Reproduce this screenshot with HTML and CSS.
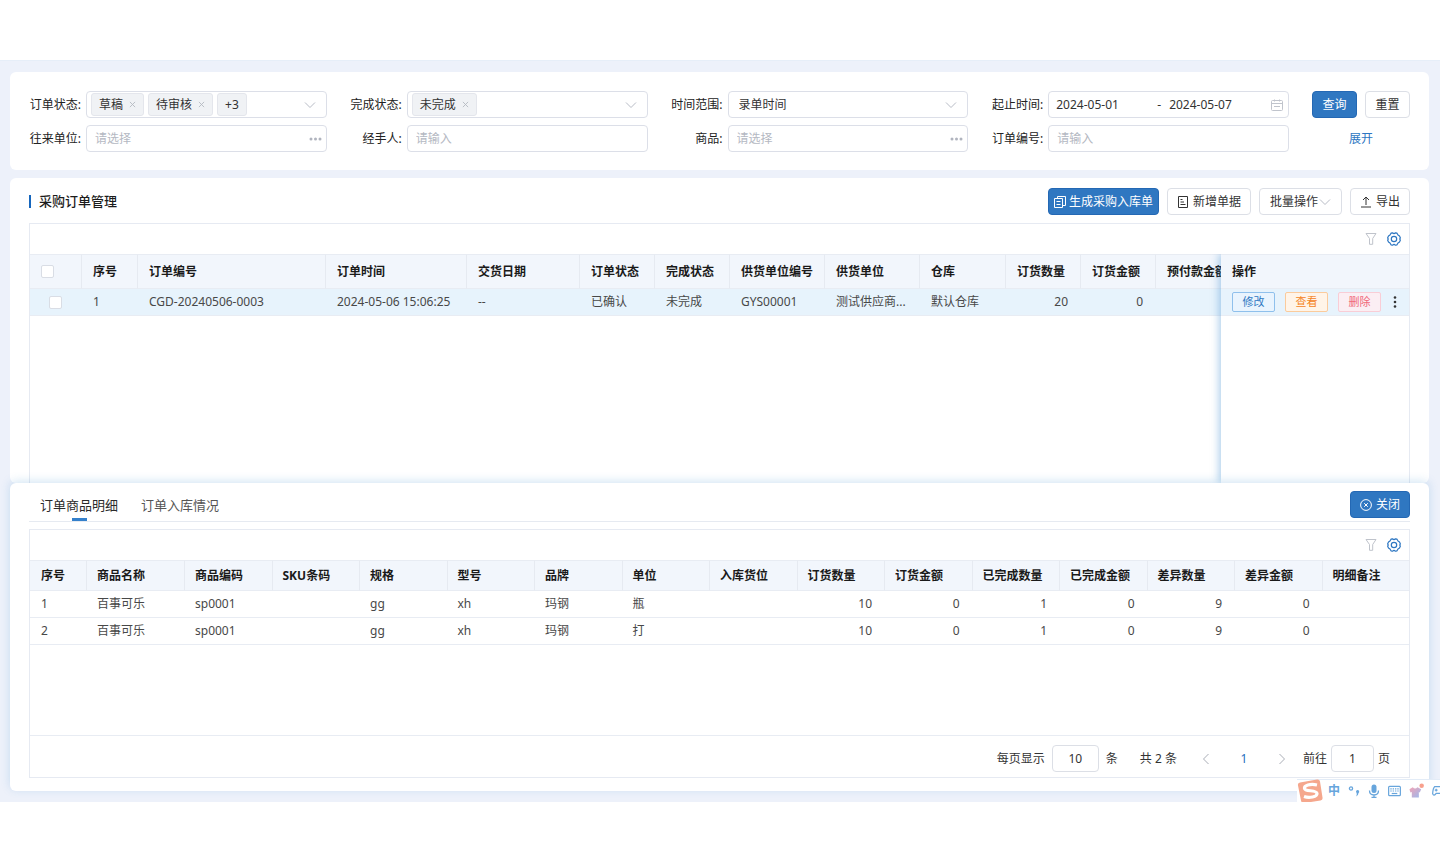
FILE: index.html
```html
<!DOCTYPE html>
<html lang="zh-CN">
<head>
<meta charset="utf-8">
<title>采购订单管理</title>
<link rel="stylesheet" href="styles.css">
</head>
<body>
<svg class="defs" aria-hidden="true">
  <symbol id="chevron" viewBox="0 0 12 12"><path d="M1 3.5 6 8.5 11 3.5"/></symbol>
  <symbol id="close" viewBox="0 0 8 8"><path d="M1 1 7 7M7 1 1 7"/></symbol>
  <symbol id="filter" viewBox="0 0 12 14"><path d="M1 1.5H11L7.7 6.5V12.3H4.5V6.5Z"/></symbol>
  <symbol id="gear" viewBox="0 0 14 14"><path d="M4 1.200 5.600.8 7 1.700 8.400.8 10 1.200 11 3 12.500 4 13.400 5.900 12.700 7 13.400 8.100 12.500 10 11 11 10 12.800 8.400 13.200 7 12.300 5.600 13.200 4 12.800 3 11 1.500 10 .6 8.100 1.300 7 .6 5.900 1.500 4 3 3Z" stroke-linejoin="round" stroke-width="1.200"/><circle cx="7" cy="7" r="2.700" stroke-width="1.200"/></symbol>
</svg>
<main class="stage">
  <form class="card filters">
    <div class="field">
      <span class="label" id="l-status">订单状态:</span>
      <div class="box tags" role="group" aria-labelledby="l-status">
        <span class="tag">草稿<button type="button" class="tag-x" aria-label="移除草稿"><svg><use href="#close"/></svg></button></span>
        <span class="tag">待审核<button type="button" class="tag-x" aria-label="移除待审核"><svg><use href="#close"/></svg></button></span>
        <span class="tag">+3</span>
        <svg class="suffix chevron"><use href="#chevron"/></svg>
      </div>
    </div>
    <div class="field">
      <span class="label" id="l-done">完成状态:</span>
      <div class="box tags" role="group" aria-labelledby="l-done">
        <span class="tag">未完成<button type="button" class="tag-x" aria-label="移除未完成"><svg><use href="#close"/></svg></button></span>
        <svg class="suffix chevron"><use href="#chevron"/></svg>
      </div>
    </div>
    <div class="field">
      <label class="label" for="range">时间范围:</label>
      <div class="box">
        <select id="range"><option>录单时间</option></select>
        <svg class="suffix chevron"><use href="#chevron"/></svg>
      </div>
    </div>
    <div class="field">
      <label class="label" for="from">起止时间:</label>
      <div class="box dates">
        <input id="from" type="text" value="2024-05-01">
        <span>-</span>
        <input type="text" value="2024-05-07" aria-label="结束时间">
        <svg class="suffix calendar" viewBox="0 0 12 12"><rect x=".5" y="1.500" width="11" height="10" rx="1"/><path d="M.5 4.500H11.500M3.500.5V2.500M8.500.5V2.500M3 7.500H9" /></svg>
      </div>
    </div>
    <div class="form-actions">
      <button type="submit" class="btn primary">查询</button>
      <button type="reset" class="btn">重置</button>
    </div>
    <div class="field">
      <label class="label" for="partner">往来单位:</label>
      <div class="box"><input id="partner" type="text" placeholder="请选择"><svg class="suffix dots" viewBox="0 0 12 4"><circle cx="1.500" cy="2" r="1.500"/><circle cx="6" cy="2" r="1.500"/><circle cx="10.500" cy="2" r="1.500"/></svg></div>
    </div>
    <div class="field">
      <label class="label" for="handler">经手人:</label>
      <div class="box"><input id="handler" type="text" placeholder="请输入"></div>
    </div>
    <div class="field">
      <label class="label" for="goods">商品:</label>
      <div class="box"><input id="goods" type="text" placeholder="请选择"><svg class="suffix dots" viewBox="0 0 12 4"><circle cx="1.500" cy="2" r="1.500"/><circle cx="6" cy="2" r="1.500"/><circle cx="10.500" cy="2" r="1.500"/></svg></div>
    </div>
    <div class="field">
      <label class="label" for="orderno">订单编号:</label>
      <div class="box"><input id="orderno" type="text" placeholder="请输入"></div>
    </div>
    <a class="expand" href="#more">展开</a>
  </form>

  <section class="card list">
    <header class="bar">
      <h1>采购订单管理</h1>
      <div class="bar-actions">
        <button class="btn primary wide"><svg class="icon" viewBox="0 0 12 12"><path d="M3.500.5H11.500V9.500H9M3.500.5V2.500M.5 2.500H8.500V11.500H.5ZM2.500 5.500H6.500M2.500 8.500H6.500"/></svg>生成采购入库单</button>
        <button class="btn wide"><svg class="icon" viewBox="0 0 12 12"><path d="M1.500.5H10.500V11.500H1.500ZM3.500 3.500H5.500M3.500 6H7M3.500 8.500H8.500"/></svg>新增单据</button>
        <button class="btn wide drop">批量操作<svg class="chevron"><use href="#chevron"/></svg></button>
        <button class="btn wide"><svg class="icon" viewBox="0 0 12 12"><path d="M6 9V1M3 4 6 1 9 4M1 11H11"/></svg>导出</button>
      </div>
    </header>
    <div class="grid-box">
      <div class="tools">
        <button class="tool" aria-label="筛选"><svg class="filter-icon"><use href="#filter"/></svg></button>
        <button class="tool" aria-label="列设置"><svg class="gear-icon"><use href="#gear"/></svg></button>
      </div>
      <div class="split">
        <div class="scroll">
          <table class="orders">
            <colgroup><col class="w-check"><col class="w-index"><col class="w-no"><col class="w-time"><col class="w-date"><col class="w-num"><col class="w-num"><col class="w-code"><col class="w-code"><col class="w-store"><col class="w-num"><col class="w-num"><col class="w-store"></colgroup>
            <thead><tr><th><input type="checkbox" aria-label="全选"></th><th>序号</th><th>订单编号</th><th>订单时间</th><th>交货日期</th><th>订单状态</th><th>完成状态</th><th>供货单位编号</th><th>供货单位</th><th>仓库</th><th>订货数量</th><th>订货金额</th><th>预付款金额</th></tr></thead>
            <tbody><tr><td class="pick"><input type="checkbox" aria-label="选择第1行"></td><td>1</td><td>CGD-20240506-0003</td><td>2024-05-06 15:06:25</td><td>--</td><td>已确认</td><td>未完成</td><td>GYS00001</td><td>测试供应商...</td><td>默认仓库</td><td class="num">20</td><td class="num">0</td><td></td></tr></tbody>
          </table>
        </div>
        <div class="pinned">
          <table class="orders">
            <thead><tr><th>操作</th></tr></thead>
            <tbody><tr><td><div class="ops"><button class="op edit">修改</button><button class="op view">查看</button><button class="op del">删除</button><button class="more" aria-label="更多"><svg viewBox="0 0 4 12"><circle cx="2" cy="1.500" r="1.300"/><circle cx="2" cy="6" r="1.300"/><circle cx="2" cy="10.500" r="1.300"/></svg></button></div></td></tr></tbody>
          </table>
        </div>
      </div>
    </div>
  </section>

  <section class="card detail">
    <header class="tabs">
      <button class="tab active">订单商品明细</button>
      <button class="tab">订单入库情况</button>
      <button class="btn primary wide shut"><svg class="icon" viewBox="0 0 12 12"><circle cx="6" cy="6" r="5.400"/><path d="M4.200 4.200 7.800 7.800M7.800 4.200 4.200 7.800"/></svg>关闭</button>
    </header>
    <div class="grid-box">
      <div class="tools">
        <button class="tool" aria-label="筛选"><svg class="filter-icon"><use href="#filter"/></svg></button>
        <button class="tool" aria-label="列设置"><svg class="gear-icon"><use href="#gear"/></svg></button>
      </div>
      <div class="lines-area">
        <table class="lines">
          <colgroup><col class="w-index"><col class="w-name"><col span="14"></colgroup>
          <thead><tr><th>序号</th><th>商品名称</th><th>商品编码</th><th>SKU条码</th><th>规格</th><th>型号</th><th>品牌</th><th>单位</th><th>入库货位</th><th>订货数量</th><th>订货金额</th><th>已完成数量</th><th>已完成金额</th><th>差异数量</th><th>差异金额</th><th>明细备注</th></tr></thead>
          <tbody>
            <tr><td>1</td><td>百事可乐</td><td>sp0001</td><td></td><td>gg</td><td>xh</td><td>玛钢</td><td>瓶</td><td></td><td class="num">10</td><td class="num">0</td><td class="num">1</td><td class="num">0</td><td class="num">9</td><td class="num">0</td><td></td></tr>
            <tr><td>2</td><td>百事可乐</td><td>sp0001</td><td></td><td>gg</td><td>xh</td><td>玛钢</td><td>打</td><td></td><td class="num">10</td><td class="num">0</td><td class="num">1</td><td class="num">0</td><td class="num">9</td><td class="num">0</td><td></td></tr>
          </tbody>
        </table>
      </div>
      <footer class="pager">
        <label for="size">每页显示</label><input id="size" class="size" type="text" value="10"><span>条</span>
        <span class="total">共 2 条</span>
        <button class="step prev" aria-label="上一页"><svg><use href="#chevron"/></svg></button>
        <button class="page">1</button>
        <button class="step next" aria-label="下一页"><svg><use href="#chevron"/></svg></button>
        <label for="goto">前往</label><input id="goto" class="goto" type="text" value="1"><span>页</span>
      </footer>
    </div>
  </section>

  <aside class="ime" aria-label="输入法">
    <svg class="ime-logo" viewBox="0 0 26 24"><path d="M3 3.500 20 .5Q22.500 0 23 2.500L25.500 18.500Q26 21 23.500 21.500L7.500 24Q4.500 24.500 4 21.500L1 6.500Q.5 4 3 3.500Z" fill="#f5a78d"/><path class="ime-curve" d="M20 6C13 4.500 7 6.500 7.500 9.500 8 13 19.500 10.500 20 14.500 20.300 18 12 19.300 7 17.500"/></svg>
    <span class="ime-mode">中</span>
    <svg class="ime-punct" viewBox="0 0 12 12"><circle class="ime-line" cx="3" cy="3.500" r="1.600"/><path d="M8 6.500a1.600 1.600 0 1 1 2.500 1.500Q10.500 10.500 8 11.500 9 10 8.700 8.600Z" fill="#67a5dc"/></svg>
    <svg class="ime-mic" viewBox="0 0 12 14"><rect x="3.500" y=".5" width="5" height="8.500" rx="2.500" fill="#67a5dc"/><path class="ime-line" d="M1.500 6.500C1.500 12.500 10.500 12.500 10.500 6.500M6 11V13.500M3.500 13.300H8.500"/></svg>
    <svg class="ime-keys" viewBox="0 0 14 12"><rect class="ime-line" x=".7" y="1" width="12.600" height="10" rx="1"/><path class="ime-line" d="M2.500 3.800H11.500M2.500 6H11.500" stroke-dasharray="1.500 1"/><path class="ime-line" d="M4 8.700H10"/></svg>
    <svg class="ime-skin" viewBox="0 0 16 16"><defs><linearGradient id="shirt" x1="0" y1="0" x2="1" y2="1"><stop stop-color="#f3a3b5"/><stop offset="1" stop-color="#99b9ef"/></linearGradient></defs><path d="M.5 6 4 4Q6.500 6.500 9 4L13 6 11.500 9.500 10.500 9V15H3V9L1.500 9.500Z" fill="url(#shirt)"/><circle cx="13.500" cy="2.500" r="2.400" fill="#f8a08d"/></svg>
    <svg class="ime-game" viewBox="0 0 14 12"><path class="ime-line" d="M3 1.200H11Q13 3 13.300 9 12 12 9.500 8.500H4.500Q2 12 .7 9 1 3 3 1.200ZM3 5H6M4.500 3.500V6.500"/><circle cx="9.500" cy="4" r=".9" fill="#67a5dc"/><circle cx="11" cy="6" r=".9" fill="#67a5dc"/></svg>
  </aside>
</main>
</body>
</html>
```

FILE: styles.css
```css
* { box-sizing: border-box; }
body {
  margin: 0;
  min-height: 100vh;
  padding: 60px 0 58px;
  display: flex;
  flex-direction: column;
  background: #fff;
  color: #333;
  font: 12px/16px "Noto Sans", "Noto Sans CJK SC", sans-serif;
}
button, input, select { font: inherit; color: inherit; margin: 0; }
button { cursor: pointer; padding: 0; border: 0; background: none; }
svg { fill: none; stroke: currentColor; display: block; flex: none; }
.defs { position: absolute; width: 0; height: 0; }

.stage {
  position: relative;
  flex: 1;
  display: flex;
  flex-direction: column;
  padding: 11px 11px 11px 10px;
  background: #edf1fa;
  border-top: 1px solid #e6eef8;
  overflow: hidden;
}
.card { background: #fff; border-radius: 6px; }

.filters {
  display: grid;
  grid-template-columns: repeat(4, minmax(0, 1fr)) 98px;
  gap: 7px 23px;
  padding: 19px 19px 18px;
  margin-bottom: 8px;
}
.field { display: flex; align-items: center; gap: 5px; }
.label { flex: 0 0 52px; text-align: right; white-space: nowrap; color: #222; }
.box {
  flex: 1;
  min-width: 0;
  height: 27px;
  display: flex;
  align-items: center;
  border: 1px solid #dcdfe8;
  border-radius: 4px;
}
.box input, .box select {
  flex: 1;
  min-width: 0;
  width: 100%;
  height: 24px;
  padding: 0 8px;
  border: 0;
  outline: 0;
  background: none;
  appearance: none;
}
.box select { padding-left: 10px; }
.box ::placeholder { color: #b4b8c2; opacity: 1; }
.tags { gap: 4px; padding-left: 4px; }
.tag {
  display: flex;
  align-items: center;
  gap: 6px;
  height: 23px;
  padding: 0 7px;
  border: 1px solid #e4e6ec;
  border-radius: 3px;
  background: #f0f2f5;
}
.tag-x svg { width: 7px; height: 7px; color: #b4b8c0; }
.suffix { margin-left: auto; margin-right: 10px; color: #b8bcc6; }
.chevron { width: 12px; height: 12px; color: #b8bcc6; }
.dots { width: 13px; height: 4px; margin-right: 4px; fill: #b0b4be; stroke: none; }
.calendar { width: 12px; height: 12px; margin-right: 5px; color: #c0c4cc; }
.dates input:first-child { flex: 0 1 108px; padding: 0 7px; }
.form-actions { display: flex; gap: 8px; }
.form-actions .btn { flex: 1; }
.expand { place-self: center; color: #2e77c2; text-decoration: none; }

.btn {
  height: 27px;
  display: flex;
  align-items: center;
  justify-content: center;
  border: 1px solid #dcdfe6;
  border-radius: 4px;
  background: #fff;
  color: #333;
  white-space: nowrap;
}
.btn.primary { background: #2f77c1; border-color: #2468b4; color: #fff; }
.btn.wide { padding: 0 9px; gap: 4px; }
.bar-actions .btn.primary { padding: 0 5px; gap: 3px; }
.btn.drop { gap: 1px; padding: 0 10px; }
.icon { width: 12px; height: 12px; }

.list { flex: 1; min-height: 305px; display: flex; flex-direction: column; padding: 10px 19px 0; }
.bar { display: flex; justify-content: space-between; align-items: center; margin-bottom: 8px; }
.bar h1 { margin: 0; padding-left: 8px; border-left: 2px solid #1666bd; font-size: 13px; line-height: 13px; font-weight: 500; color: #1c1c1c; }
.bar-actions { display: flex; gap: 8px; }

.grid-box { border: 1px solid #e6eaf2; display: flex; flex-direction: column; }
.list .grid-box { flex: 1; border-bottom: 0; }
.tools { height: 30px; display: flex; justify-content: flex-end; align-items: center; gap: 10px; padding-right: 8px; }
.filter-icon { width: 12px; height: 14px; color: #bfc3cb; }
.gear-icon { width: 14px; height: 14px; color: #2e77c2; }
.split { flex: 1; display: flex; }
.scroll { flex: 1; min-width: 0; overflow: hidden; }
.pinned { position: relative; flex: 0 0 188px; background: #fff; box-shadow: -2px 0 8px rgba(50, 135, 205, .4); clip-path: inset(0 0 0 -14px); }

table { border-collapse: separate; border-spacing: 0; table-layout: fixed; width: 100%; }
th, td { padding: 0 11px; text-align: left; white-space: nowrap; overflow: hidden; border-bottom: 1px solid #e8ecf3; }
th { background: #f2f6fc; font-weight: 700; color: #1a1a1a; border-top: 1px solid #e8ecf3; }
th + th { border-left: 1px solid #e6eaf1; }
td { height: 27px; color: #484848; }
td + td { padding-left: 12px; }
td.num { text-align: right; padding-right: 12px; }
.lines th + th { padding-left: 10px; }
.lines td + td { padding-left: 11px; }
.orders th { height: 35px; }
.orders td { background: #e7f3fc; }
.scroll .orders { width: 1210px; min-width: 100%; }
.orders input { display: block; appearance: none; width: 13px; height: 13px; border: 1px solid #d9dde5; border-radius: 2px; background: #fff; }
.orders .pick { padding-left: 19px; }
.w-check { width: 51px; }
.w-index { width: 56px; }
.w-no { width: 188px; }
.w-time { width: 141px; }
.w-date { width: 113px; }
.w-num { width: 75px; }
.w-code { width: 95px; }
.w-store { width: 86px; }
.w-name { width: 98px; }

.ops { display: flex; align-items: center; gap: 10px; }
.op { flex: none; width: 43px; height: 20px; border: 1px solid; border-radius: 2px; font-size: 11px; line-height: 16px; }
.edit { color: #2e77c2; border-color: #8fc0ec; background: #e9f4fe; }
.view { color: #f48424; border-color: #fbcb9c; background: #fff4e8; }
.del { color: #f0687a; border-color: #f9cdd6; background: #fbeef3; }
.more { padding: 0 2px; }
.more svg { width: 4px; height: 12px; fill: #333; stroke: none; }

.detail { position: relative; padding: 8px 19px 13px; box-shadow: 0 -2px 10px rgba(60, 140, 205, .22); }
.tabs { display: flex; align-items: flex-start; gap: 23px; padding: 0 0 2px 11px; border-bottom: 1px solid #e6eaf1; margin-bottom: 7px; }
.tab { position: relative; height: 28px; font-size: 13px; line-height: 18px; color: #555; }
.tab.active { color: #2b2b2b; }
.tab.active::after { content: ""; position: absolute; left: 50%; bottom: -2px; width: 15px; height: 3px; margin-left: -7px; background: #3480cb; }
.shut { margin-left: auto; }
.lines-area { min-height: 175px; }
.lines th { height: 31px; }
.pager { display: flex; justify-content: flex-end; align-items: center; padding: 9px 19px 5px; border-top: 1px solid #e8ecf3; }
.pager input { height: 27px; padding: 0; text-align: center; border: 1px solid #dcdfe6; border-radius: 4px; }
.pager .size { width: 47px; margin: 0 7px; }
.pager .goto { width: 43px; margin: 0 4px; }
.total { margin: 0 23px 0 22px; }
.step svg { width: 12px; height: 12px; color: #a9adb6; }
.prev svg { transform: rotate(90deg); }
.next svg { transform: rotate(-90deg); }
.page { width: 24px; margin: 0 20px; color: #1f6fc0; }
.next { margin-right: 15px; }

.ime {
  position: absolute;
  right: 0;
  bottom: 0;
  width: 143px;
  height: 23px;
  display: flex;
  align-items: center;
  gap: 8px;
  background: #fff;
  border-top: 1px solid #e3ecf7;
  color: #67a5dc;
}
.ime svg { stroke: none; }
.ime .ime-line { fill: none; stroke: #67a5dc; stroke-width: 1.3; }
.ime .ime-curve { fill: none; stroke: #fff; stroke-width: 3.2; }
.ime-logo { width: 26px; height: 24px; }
.ime-mode { font-weight: 700; margin-left: -3px; }
.ime-punct, .ime-mic { width: 12px; height: 14px; }
.ime-keys, .ime-game { width: 13px; height: 12px; }
.ime-skin { width: 15px; height: 16px; }
```
